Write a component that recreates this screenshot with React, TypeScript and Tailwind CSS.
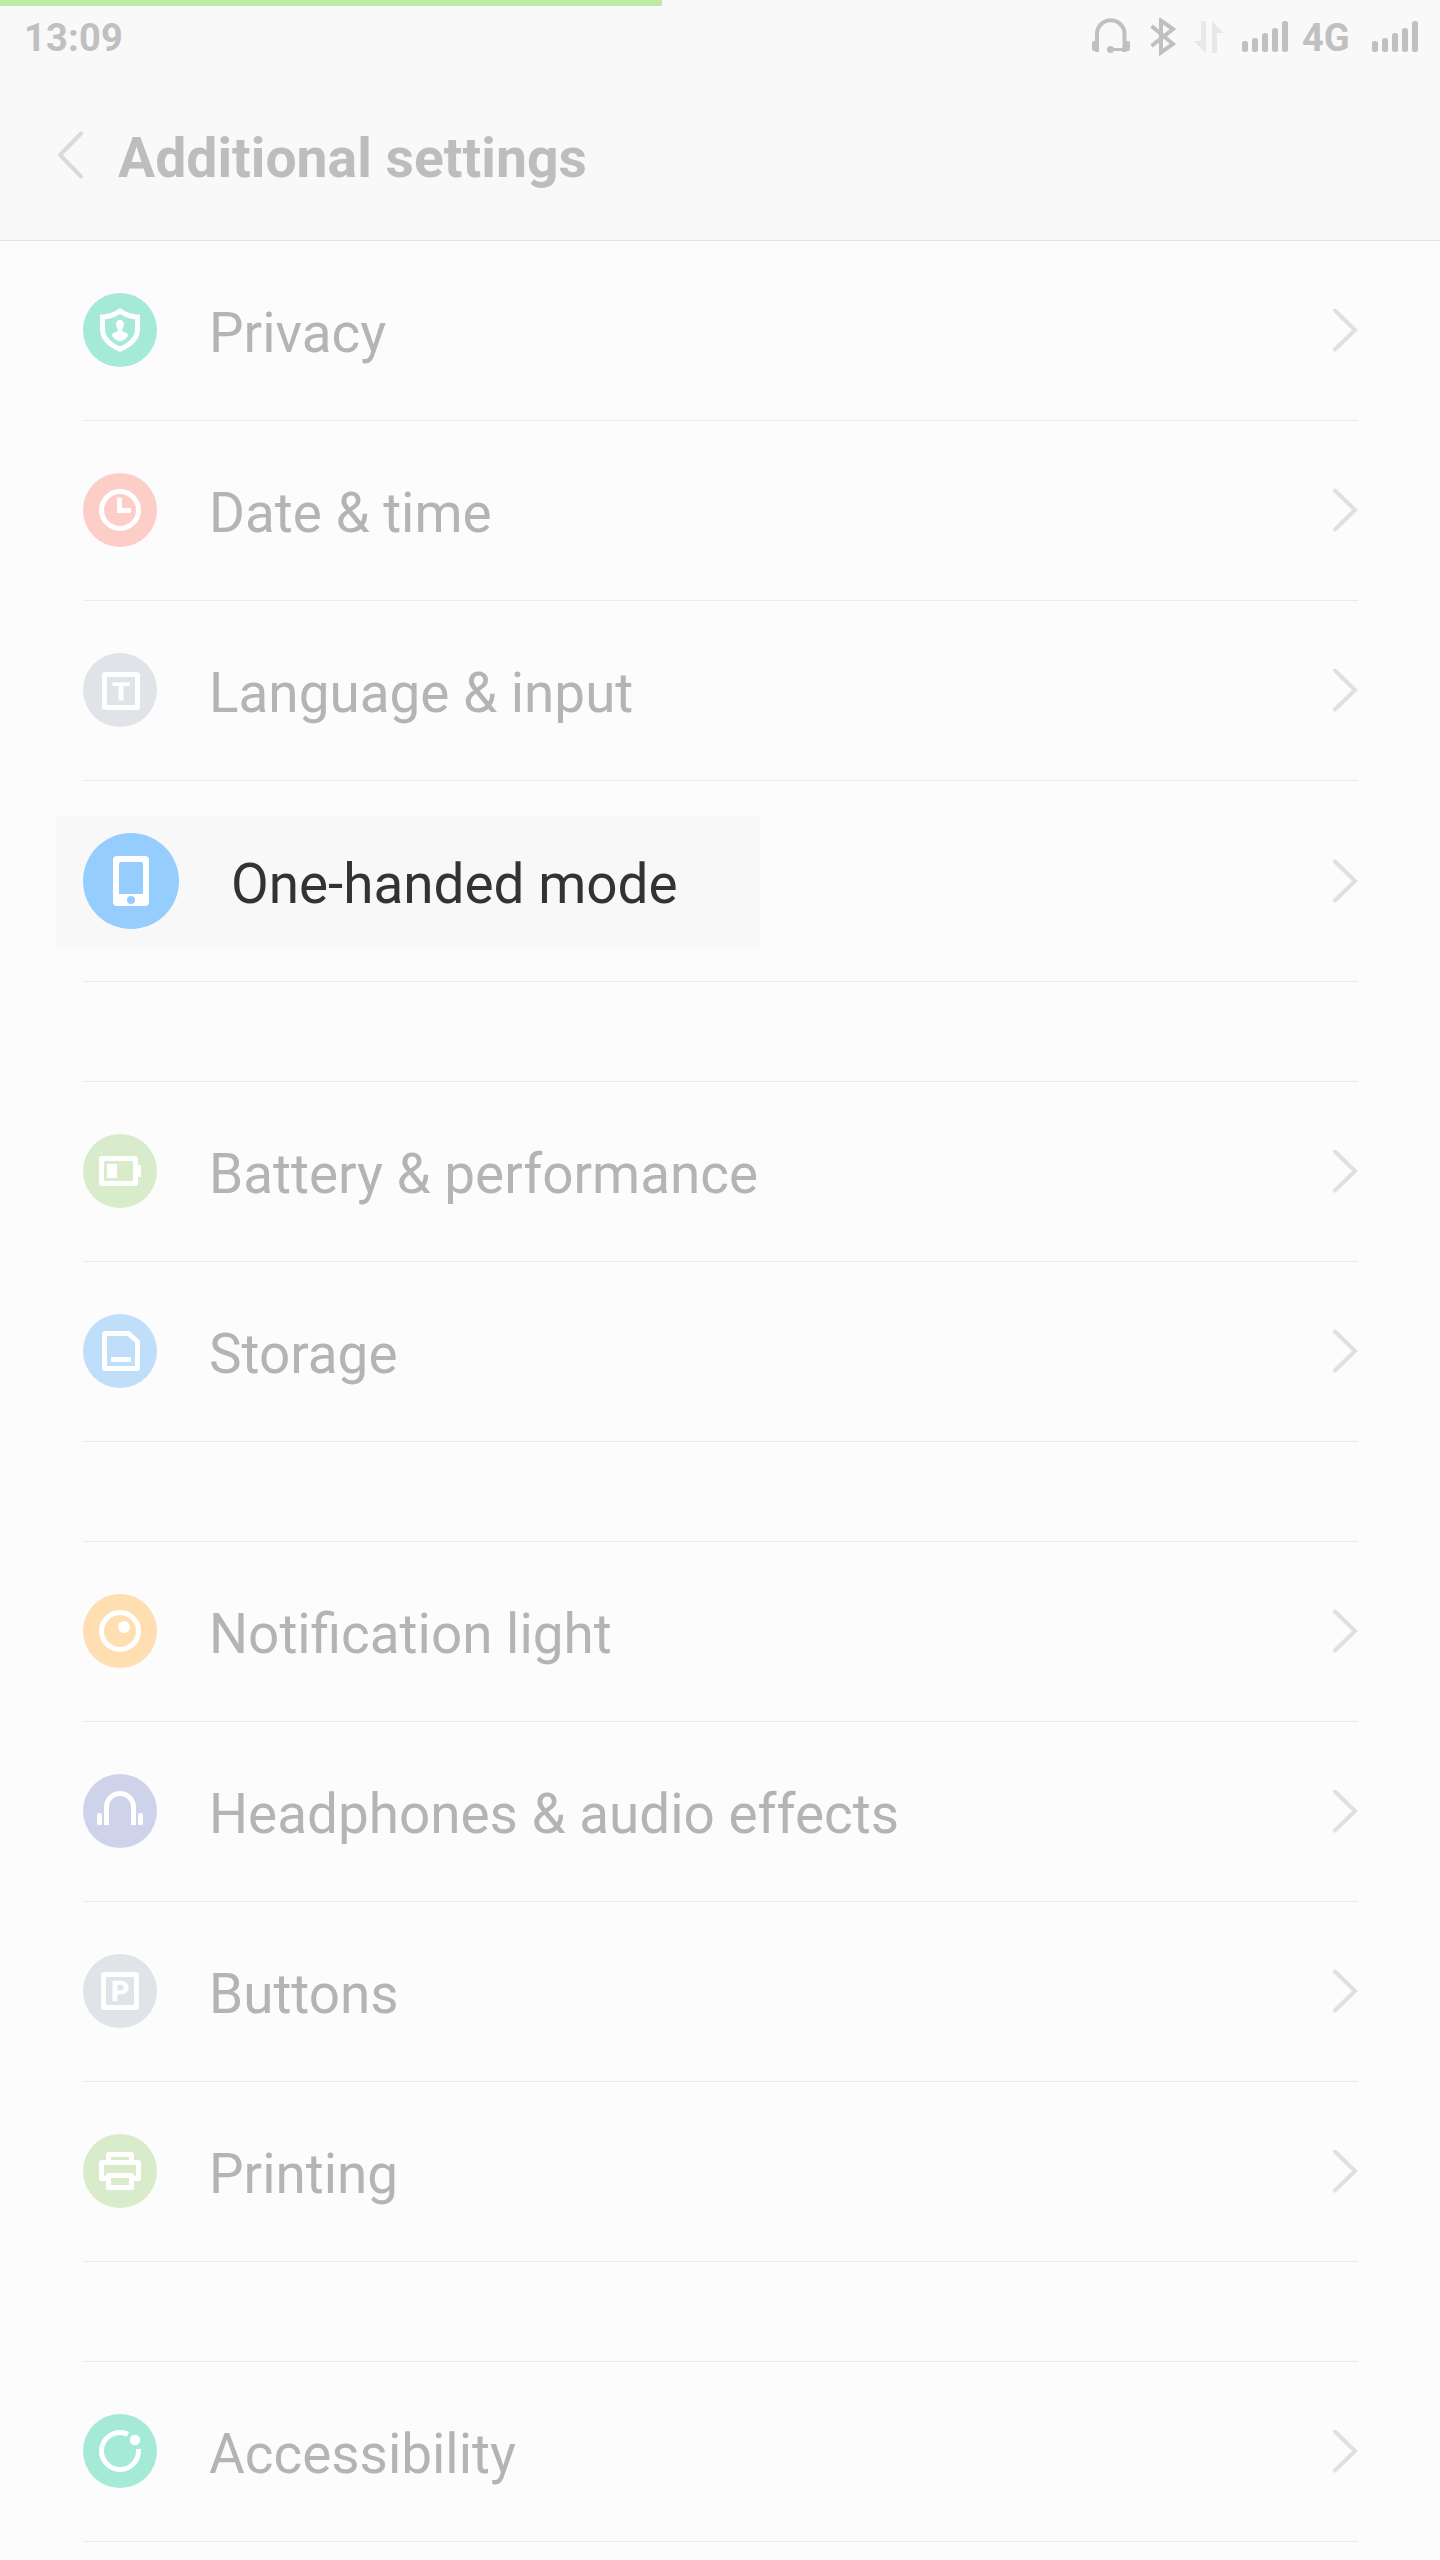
import type { ReactNode } from 'react';

type Item = {
  label: string;
  color: string;
  icon: ReactNode;
  active?: boolean;
};

const groups: Item[][] = [
  [
    {
      label: 'Privacy',
      color: 'bg-[#a4ead7]',
      icon: (
        <>
          <path d="M37 18C32 21.5 26 23.8 19.5 24V36C19.5 46 27 52 37 56.3C47 52 54.5 46 54.5 36V24C48 23.8 42 21.5 37 18Z" fill="none" stroke="#fff" strokeWidth="5" />
          <path d="M37 27c-2.600 0-4 1.800-4 4.200 0 2.800 1.800 4 1.800 6.500C34 39.500 29 39 29 42.500c1.500 3 4.500 5 8 6 3.500-1 6.500-3 8-6C45 39 40 39.500 39.200 37.700c0-2.500 1.800-3.700 1.800-6.500C41 28.800 39.600 27 37 27Z" />
        </>
      ),
    },
    {
      label: 'Date & time',
      color: 'bg-[#fdcdc8]',
      icon: (
        <>
          <circle cx="37" cy="37" r="18.500" fill="none" stroke="#fff" strokeWidth="5" />
          <rect x="34" y="24.500" width="5" height="15.500" rx="1" />
          <rect x="34" y="35" width="14" height="5" rx="1" />
        </>
      ),
    },
    {
      label: 'Language & input',
      color: 'bg-[#e0e4e9]',
      icon: (
        <>
          <rect x="21.500" y="21.500" width="33" height="33" rx="1" fill="none" stroke="#fff" strokeWidth="5" strokeLinejoin="round" />
          <text x="38" y="46.500" textAnchor="middle" fontSize="24" fontWeight="500" stroke="#fff" strokeWidth="1.200" strokeLinejoin="round" textLength="17" lengthAdjust="spacingAndGlyphs">T</text>
        </>
      ),
    },
    {
      label: 'One-handed mode',
      color: 'bg-[#94cdfe]',
      active: true,
      icon: (
        <path fillRule="evenodd" d="M34 23H62a4 4 0 0 1 4 4V69a4 4 0 0 1-4 4H34a4 4 0 0 1-4-4V27a4 4 0 0 1 4-4ZM38 29a2 2 0 0 0-2 2V61H60V31a2 2 0 0 0-2-2ZM48 63a4 4 0 1 0 0 8a4 4 0 1 0 0-8Z" />
      ),
    },
  ],
  [
    {
      label: 'Battery & performance',
      color: 'bg-[#d8ebca]',
      icon: (
        <>
          <rect x="18.500" y="24.500" width="34" height="25" fill="none" stroke="#fff" strokeWidth="5" strokeLinejoin="round" />
          <rect x="54" y="31" width="4" height="12" rx="1" />
          <rect x="24" y="30" width="10" height="14" rx="0.500" />
        </>
      ),
    },
    {
      label: 'Storage',
      color: 'bg-[#bfdefa]',
      icon: (
        <>
          <path d="M22.500 19.500H45.500L54.500 27.500V53.500a1 1 0 0 1-1 1H22.500a1 1 0 0 1-1-1V20.500a1 1 0 0 1 1-1Z" fill="none" stroke="#fff" strokeWidth="5" strokeLinejoin="round" />
          <rect x="28" y="43" width="20" height="5" rx="1" />
        </>
      ),
    },
  ],
  [
    {
      label: 'Notification light',
      color: 'bg-[#ffdeb1]',
      icon: (
        <>
          <circle cx="37" cy="37" r="18.500" fill="none" stroke="#fff" strokeWidth="5" />
          <circle cx="41" cy="33" r="6" />
        </>
      ),
    },
    {
      label: 'Headphones & audio effects',
      color: 'bg-[#cfd2eb]',
      icon: (
        <>
          <path d="M23.500 51V33a13.500 13.500 0 0 1 27 0V51" fill="none" stroke="#fff" strokeWidth="5" />
          <rect x="14" y="39" width="5" height="12" rx="1.500" />
          <rect x="55" y="39" width="5" height="12" rx="1.500" />
        </>
      ),
    },
    {
      label: 'Buttons',
      color: 'bg-[#e0e4e9]',
      icon: (
        <>
          <rect x="20.500" y="20.500" width="33" height="33" rx="1" fill="none" stroke="#fff" strokeWidth="5" strokeLinejoin="round" />
          <text x="28" y="47" fontSize="28" fontWeight="700" stroke="#fff" strokeWidth="0.500">P</text>
        </>
      ),
    },
    {
      label: 'Printing',
      color: 'bg-[#d8ebca]',
      icon: (
        <g fill="none" stroke="#fff" strokeWidth="5" strokeLinejoin="round">
          <path d="M25.500 28V20.500H48.500V28" />
          <path d="M23 44.500H18.500V28.500H55.500V44.500H51" />
          <path d="M25.500 41.500H48.500V53.500H25.500Z" />
        </g>
      ),
    },
  ],
  [
    {
      label: 'Accessibility',
      color: 'bg-[#a4ead7]',
      icon: (
        <>
          <path d="M45 20.300A18.500 18.500 0 1 0 55.400 35" fill="none" stroke="#fff" strokeWidth="5" />
          <circle cx="52" cy="26" r="5.200" />
        </>
      ),
    },
  ],
];

function Signal() {
  return (
    <svg width="46" height="32" viewBox="0 0 46 32" fill="#c0c0c0">
      <rect x="0" y="20" width="6" height="11" rx="2.500" />
      <rect x="10" y="17" width="6" height="14" rx="2.500" />
      <rect x="20" y="12" width="6" height="19" rx="2.500" />
      <rect x="30" y="7" width="6" height="24" rx="2.500" />
      <rect x="40" y="0" width="6" height="31" rx="2.500" />
    </svg>
  );
}

function StatusBar() {
  return (
    <div className="flex h-[62px] items-center justify-between pr-[22px] pl-[24px] text-[38px] leading-none font-bold text-[#c0c0c0]">
      <span className="pt-[2px] tracking-[0.2px]">13:09</span>
      <div className="flex items-center">
        <svg className="mr-[20px]" width="38" height="38" viewBox="0 0 38 38">
          <path d="M5 34V16a13.500 13.500 0 0 1 27.500 0V34" fill="none" stroke="#c0c0c0" strokeWidth="4" />
          <rect x="0" y="23" width="5" height="10" rx="2" fill="#c0c0c0" />
          <rect x="33" y="23" width="5" height="10" rx="2" fill="#c0c0c0" />
          <circle cx="18.500" cy="31.500" r="3.600" fill="#c0c0c0" />
          <path d="M18 31.500H32" stroke="#c0c0c0" strokeWidth="3" />
        </svg>
        <svg className="mr-[18px]" width="26" height="38" viewBox="0 0 26 38" fill="none" stroke="#c0c0c0" strokeWidth="4">
          <path d="M1.500 8L23 26L11 34.500V2.500L23 11L1.500 28" />
        </svg>
        <svg className="mr-[18px]" width="30" height="32" viewBox="0 0 30 32" fill="#e8e8e8">
          <path d="M7 1.500A1.500 1.500 0 0 1 8.500 0H10.500A1.500 1.500 0 0 1 12 1.500V32L0 20H7Z" />
          <path d="M18 0L30 12H23V30.500A1.500 1.500 0 0 1 21.500 32H19.500A1.500 1.500 0 0 1 18 30.500Z" />
        </svg>
        <Signal />
        <span className="mr-[22px] ml-[14px] w-[48px] pt-[2px]">4G</span>
        <Signal />
      </div>
    </div>
  );
}

function Row({ item }: { item: Item }) {
  const size = item.active ? 96 : 74;
  return (
    <li className={`flex items-center justify-between border-b border-[#ebebeb] ${item.active ? 'h-[201px]' : 'h-[180px] pb-px'}`}>
      <div className={`flex items-center gap-[52px] ${item.active ? '-ml-[27px] mt-[2px] h-[132px] w-[704px] bg-[#f8f8f8] pb-[2px] pl-[27px]' : ''}`}>
        <div className={`shrink-0 rounded-full ${item.color} ${item.active ? 'size-24' : 'size-[74px]'}`}>
          <svg className="size-full" viewBox={`0 0 ${size} ${size}`} fill="#fff">
            {item.icon}
          </svg>
        </div>
        <span className={`pt-[6px] text-[54.85px] leading-[64px] whitespace-nowrap ${item.active ? 'text-[#333]' : 'text-[#b4b4b4]'}`}>
          {item.label}
        </span>
      </div>
      <svg width="26" height="44" viewBox="0 0 26 44" fill="none" stroke="#e0e0e0" strokeWidth="4" strokeLinecap="round">
        <path d="M3 2.500L23 22L3 41.500" />
      </svg>
    </li>
  );
}

export default function App() {
  return (
    <div className="h-[2560px] w-[1440px] overflow-hidden bg-[#fcfcfc] font-['Roboto',sans-serif]">
      <header className="h-[241px] border-b border-[#e4e4e4] bg-[#f9f9f9]">
        <div className="h-[6px] w-[662px] bg-[#bdeaa4]" />
        <StatusBar />
        <div className="flex items-center gap-[34px] pt-[51px] pl-[57px]">
          <svg width="27" height="48" viewBox="0 0 27 48" fill="none" stroke="#dadada" strokeWidth="4" strokeLinecap="round">
            <path d="M24 2.500L3 24L24 45.500" />
          </svg>
          <h1 className="pt-[8px] text-[55.3px] leading-[64px] font-bold text-[#bdbdbd]">Additional settings</h1>
        </div>
      </header>
      <main className="pr-[82px] pl-[83px]">
        {groups.map((items, i) => (
          <ul key={i} className={i > 0 ? 'mt-[99px] border-t border-[#ebebeb]' : ''}>
            {items.map((item) => (
              <Row key={item.label} item={item} />
            ))}
          </ul>
        ))}
      </main>
    </div>
  );
}
